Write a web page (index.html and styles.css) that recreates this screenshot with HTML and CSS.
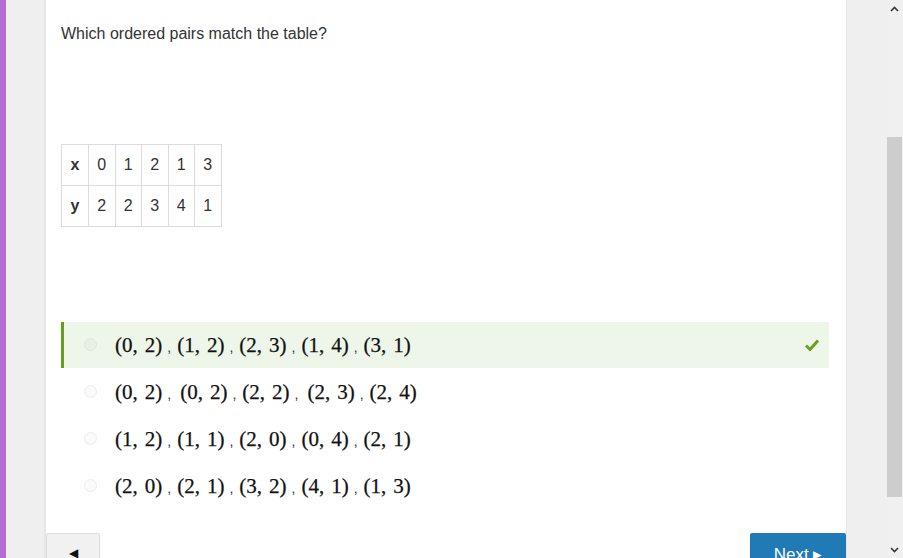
FILE: index.html
```html
<!DOCTYPE html>
<html>
<head>
<meta charset="utf-8">
<link rel="stylesheet" href="styles.css">
</head>
<body>
<div class="page">
  <div class="accent"></div>
  <div class="gutter"></div>
  <main class="panel">
    <p class="question">Which ordered pairs match the table?</p>
    <table class="data">
      <tr><th>x</th><td>0</td><td>1</td><td>2</td><td>1</td><td>3</td></tr>
      <tr><th>y</th><td>2</td><td>2</td><td>3</td><td>4</td><td>1</td></tr>
    </table>
    <ul class="options">
      <li class="option correct">
        <span class="radio"></span>
        <span class="answer"><span class="m">(0,&#8202; 2)</span><span class="sep">,</span><span class="m">(1,&#8202; 2)</span><span class="sep">,</span><span class="m">(2,&#8202; 3)</span><span class="sep">,</span><span class="m">(1,&#8202; 4)</span><span class="sep">,</span><span class="m">(3,&#8202; 1)</span></span>
        <svg class="check" width="14" height="12" viewBox="0 0 14 12"><path d="M1 6.5 L5 10.5 L13 1.5" fill="none" stroke="#6aa121" stroke-width="3"/></svg>
      </li>
      <li class="option">
        <span class="radio"></span>
        <span class="answer"><span class="m">(0,&#8202; 2)</span><span class="sep wide">,</span><span class="m">(0,&#8202; 2)</span><span class="sep">,</span><span class="m">(2,&#8202; 2)</span><span class="sep wide">,</span><span class="m">(2,&#8202; 3)</span><span class="sep">,</span><span class="m">(2,&#8202; 4)</span></span>
      </li>
      <li class="option">
        <span class="radio"></span>
        <span class="answer"><span class="m">(1,&#8202; 2)</span><span class="sep">,</span><span class="m">(1,&#8202; 1)</span><span class="sep">,</span><span class="m">(2,&#8202; 0)</span><span class="sep">,</span><span class="m">(0,&#8202; 4)</span><span class="sep">,</span><span class="m">(2,&#8202; 1)</span></span>
      </li>
      <li class="option">
        <span class="radio"></span>
        <span class="answer"><span class="m">(2,&#8202; 0)</span><span class="sep">,</span><span class="m">(2,&#8202; 1)</span><span class="sep">,</span><span class="m">(3,&#8202; 2)</span><span class="sep">,</span><span class="m">(4,&#8202; 1)</span><span class="sep">,</span><span class="m">(1,&#8202; 3)</span></span>
      </li>
    </ul>
    <div class="nav">
      <button class="back">&#9664;</button>
      <button class="next">Next &#9656;</button>
    </div>
  </main>
  <div class="side"></div>
  <div class="scrollbar">
    <div class="arrow up">
      <svg width="9" height="6" viewBox="0 0 9 6"><path d="M1 5 L4.5 1.5 L8 5" fill="none" stroke="#333" stroke-width="1.6"/></svg>
    </div>
    <div class="track-top"></div>
    <div class="thumb"></div>
    <div class="track-bottom"></div>
    <div class="arrow down">
      <svg width="9" height="6" viewBox="0 0 9 6"><path d="M1 1 L4.5 4.5 L8 1" fill="none" stroke="#333" stroke-width="1.6"/></svg>
    </div>
  </div>
</div>
</body>
</html>
```
FILE: styles.css
```css
html, body {
  margin: 0;
  padding: 0;
  width: 903px;
  height: 558px;
  overflow: hidden;
  background: #fff;
}

.page {
  display: flex;
  height: 558px;
}

.accent {
  width: 6px;
  background: #b36fd0;
  flex: none;
}

.gutter {
  width: 38px;
  background: #efefef;
  border-right: 2px solid #e6e6e6;
  flex: none;
}

.panel {
  width: 785px;
  padding-left: 15px;
  background: #fff;
  flex: none;
  display: flex;
  flex-direction: column;
  align-items: flex-start;
  font-family: "Liberation Sans", Arial, sans-serif;
  color: #333;
}

.question {
  margin: 25px 0 0;
  font-size: 16px;
  line-height: 18px;
}

.data {
  margin-top: 101px;
  border-collapse: collapse;
  font-size: 16px;
  color: #333;
}

.data th, .data td {
  border: 1px solid #dcdcdc;
  height: 40px;
  padding: 0;
  text-align: center;
  font-weight: normal;
}

.data th {
  width: 26px;
  font-weight: bold;
}

.data td {
  width: 25.5px;
}

.options {
  list-style: none;
  margin: 95px 0 0;
  padding: 0;
  width: 768px;
  display: flex;
  flex-direction: column;
  gap: 1px;
}

.option {
  height: 46px;
  display: flex;
  align-items: center;
  padding-left: 20px;
  border-left: 3px solid transparent;
}

.option.correct {
  background: #eef6e9;
  border-left-color: #64a21e;
}

.radio {
  width: 11px;
  height: 11px;
  border-radius: 50%;
  border: 1px solid #ececec;
  background: #fafafa;
  flex: none;
  margin-right: 18px;
  position: relative;
  top: -1px;
}

.correct .radio {
  border-color: #dde6d8;
  background: #e8efe4;
}

.answer {
  font-family: "Liberation Serif", "Times New Roman", serif;
  font-size: 21px;
  color: #111;
  display: flex;
  align-items: baseline;
  flex: 1;
  -webkit-text-stroke: 0.25px #111;
}

.m {
  white-space: pre;
}

.sep {
  font-family: "Liberation Sans", Arial, sans-serif;
  font-size: 14px;
  padding: 0 6px 0 5px;
  color: #333;
  -webkit-text-stroke: 0;
}

.sep.wide {
  padding-right: 9px;
}

.check {
  margin-right: 10px;
}

.nav {
  margin-top: 24px;
  display: flex;
  justify-content: space-between;
  width: 800px;
  margin-left: -15px;
}

.back {
  width: 54px;
  height: 40px;
  background: #f1f1f1;
  border: 1px solid #dcdcdc;
  border-radius: 2px;
  font-size: 12px;
  color: #111;
  padding: 0;
}

.next {
  width: 96px;
  height: 40px;
  background: #1f7ab6;
  border: none;
  border-radius: 2px 2px 0 0;
  color: #fff;
  font-family: "Liberation Sans", Arial, sans-serif;
  font-size: 17px;
  padding: 2px 0 0;
}

.side {
  width: 39px;
  background: #efefef;
  border-left: 1px solid #e6e6e6;
  flex: none;
}

.scrollbar {
  width: 17px;
  background: #f0f0f0;
  flex: none;
  display: flex;
  flex-direction: column;
}

.arrow {
  height: 17px;
  display: flex;
  align-items: center;
  justify-content: center;
  flex: none;
}

.track-top {
  height: 120px;
}

.thumb {
  height: 360px;
  margin: 0 1px;
  background: #cdcdcd;
}

.track-bottom {
  flex: 1;
}
```
